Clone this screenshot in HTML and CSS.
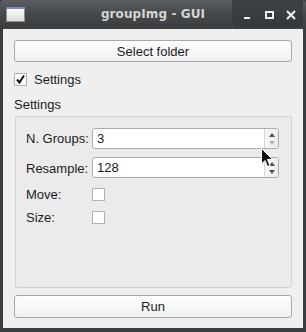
FILE: index.html
```html
<!DOCTYPE html>
<html lang="en">
<head>
  <meta charset="UTF-8">
  <title>groupImg - GUI</title>
  <link rel="stylesheet" href="styles.css">
</head>
<body>
  <div class="window">
    <div class="titlebar">
      <div class="app-icon"></div>
      <div class="title">groupImg - GUI</div>
      <div class="controls">
        <span class="ctl-min"></span>
        <span class="ctl-max"></span>
        <svg class="ctl-close" width="10" height="10" viewBox="0 0 10 10">
          <path d="M1 1L9 9M9 1L1 9" stroke="#f2f2f2" stroke-width="2"/>
        </svg>
      </div>
    </div>

    <div class="client">
      <div class="button">Select folder</div>

      <div class="check-row">
        <span class="checkbox">
          <svg width="11" height="11" viewBox="0 0 11 11">
            <path d="M2 5.5L4.5 8.5L9 1.5" fill="none" stroke="#111" stroke-width="2"/>
          </svg>
        </span>
        <span>Settings</span>
      </div>

      <div class="group-title">Settings</div>

      <div class="group">
        <div class="form">
          <span class="label">N. Groups:</span>
          <div class="spin">
            <span class="spin-text">3</span>
            <span class="spin-btns">
              <span class="arrow-up"></span>
              <span class="arrow-down dim"></span>
            </span>
          </div>

          <span class="label">Resample:</span>
          <div class="spin">
            <span class="spin-text">128</span>
            <span class="spin-btns">
              <span class="arrow-up"></span>
              <span class="arrow-down"></span>
            </span>
          </div>

          <span class="label">Move:</span>
          <span class="checkbox"></span>

          <span class="label">Size:</span>
          <span class="checkbox"></span>
        </div>
      </div>

      <div class="button run">Run</div>
    </div>

    <svg class="cursor" width="13" height="20" viewBox="0 0 13 20">
      <path d="M0.5 0.5L0.5 16L4 12.5L6.5 18.5L9 17.5L6.5 11.5L11.5 11.5Z" fill="#111" stroke="#fff" stroke-width="1"/>
    </svg>
  </div>
</body>
</html>
```

FILE: styles.css
```css
body{
  margin: 0;
  padding: 0;
  background: #3a3d3f;
}
.window{
  position: relative;
  width: 306px;
  height: 332px;
  background: #3b3e40;
  border-radius: 4px 4px 0 0;
  display: flex;
  flex-direction: column;
  overflow: hidden;
}
.titlebar{
  height: 29px;
  flex: none;
  display: flex;
  align-items: flex-start;
  background: linear-gradient(#5b5e60, #45484a 50%, #3c3f41);
  position: relative;
}
.app-icon{
  width: 19px;
  height: 15px;
  margin: 7px 0 0 6px;
  border: 1px solid #8c9094;
  border-top: 2px solid #6a8fcc;
  background: linear-gradient(#fafafa, #dcdcdc);
  box-sizing: border-box;
}
.title{
  position: absolute;
  left: 0;
  right: 0;
  top: 7px;
  text-align: center;
  font-family: "DejaVu Sans", sans-serif;
  font-weight: bold;
  font-size: 12px;
  color: #d4d4d4;
  letter-spacing: 0.1px;
}
.controls{
  margin-left: auto;
  margin-right: 3px;
  width: 71px;
  height: 27px;
  background: linear-gradient(#3f4244, #35383a);
  border-radius: 0 0 0 6px;
  display: flex;
  align-items: center;
  position: relative;
}
.ctl-min{
  position: absolute;
  left: 12px;
  top: 17px;
  width: 6px;
  height: 2px;
  background: #f2f2f2;
}
.ctl-max{
  position: absolute;
  left: 33px;
  top: 11px;
  width: 9px;
  height: 8px;
  border: 2px solid #f2f2f2;
  border-top-width: 2px;
  box-sizing: border-box;
}
.ctl-close{
  position: absolute;
  left: 54px;
  top: 10px;
}
.client{
  flex: 1;
  margin: 0 3px 4px 3px;
  background: #efefef;
  padding: 11px 11px 10px 11px;
  display: flex;
  flex-direction: column;
  font-family: "Liberation Sans", Arial, sans-serif;
  font-size: 13px;
  color: #1c1c1c;
}
.button{
  height: 22px;
  box-sizing: border-box;
  border: 1px solid #a9a9a9;
  border-radius: 3px;
  background: linear-gradient(#fdfdfd, #f0f0f0);
  display: flex;
  align-items: center;
  justify-content: center;
  flex: none;
}
.run{
  height: 23px;
  margin-top: 7px;
}
.check-row{
  margin-top: 10px;
  height: 14px;
  display: flex;
  align-items: center;
  gap: 7px;
}
.checkbox{
  width: 13px;
  height: 13px;
  box-sizing: border-box;
  border: 1px solid #b2b2b2;
  background: #fff;
  display: flex;
  align-items: center;
  justify-content: center;
}
.group-title{
  margin-top: 11px;
  height: 16px;
  line-height: 16px;
}
.group{
  flex: 1;
  margin: 3px 0 0 1px;
  border: 1px solid #d2d2d2;
  border-radius: 2px;
  background: #ebebeb;
  padding: 11px 12px 0 10px;
}
.form{
  display: grid;
  grid-template-columns: 66px 1fr;
  grid-auto-rows: auto;
  row-gap: 8px;
  align-items: center;
}
.spin{
  height: 21px;
  box-sizing: border-box;
  border: 1px solid #acacac;
  border-radius: 3px;
  background: #fff;
  display: flex;
  align-items: center;
}
.spin + .label{
  margin-top: 1px;
}
.spin-text{
  flex: 1;
  padding-left: 4px;
}
.spin-btns{
  width: 13px;
  height: 100%;
  border-left: 1px solid #d6d6d6;
  background: linear-gradient(90deg, #f6f6f6, #ececec);
  border-radius: 0 2px 2px 0;
  display: flex;
  flex-direction: column;
  align-items: center;
  justify-content: center;
  gap: 4px;
}
.arrow-up,
.arrow-down{
  width: 0;
  height: 0;
  border-left: 3.5px solid transparent;
  border-right: 3.5px solid transparent;
}
.arrow-up{
  border-bottom: 4px solid #505050;
}
.arrow-down{
  border-top: 4px solid #505050;
}
.arrow-down.dim{
  border-top-color: #b4b4b4;
}
.cursor{
  position: absolute;
  left: 261px;
  top: 148px;
}
```
